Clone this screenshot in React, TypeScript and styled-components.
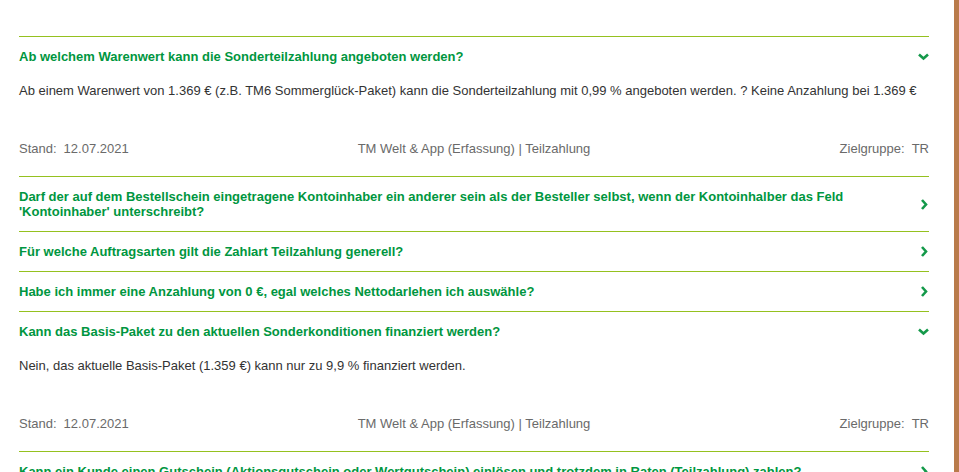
import React from "react";
import styled, { createGlobalStyle } from "styled-components";

const GlobalStyle = createGlobalStyle`
  html, body {
    margin: 0;
    padding: 0;
    background: #ffffff;
    overflow: hidden;
  }
  body {
    font-family: "Liberation Sans", Arial, sans-serif;
  }
`;

const Frame = styled.div`
  display: grid;
  grid-template-columns: 1fr 5px;
  width: 959px;
  height: 472px;
  overflow: hidden;
`;

const Content = styled.main`
  padding: 36px 25px 0 19px;
`;

const SideBar = styled.div`
  background: #b97b4b;
`;

const FaqList = styled.div`
  display: flex;
  flex-direction: column;
`;

const Item = styled.section`
  border-top: 1px solid #95c11f;
`;

const Question = styled.div`
  display: flex;
  align-items: center;
  justify-content: space-between;
  padding: 12px 0;
  cursor: pointer;
`;

const Title = styled.h3`
  margin: 0;
  padding-right: 40px;
  font-size: 13px;
  line-height: 15px;
  font-weight: bold;
  color: #009640;
`;

const Chevron = styled.svg`
  flex: none;
  width: 11px;
  height: 11px;
`;

const Answer = styled.div`
  padding: 7px 0 20px;
`;

const AnswerText = styled.p`
  margin: 0;
  font-size: 13px;
  line-height: 15px;
  color: #333333;
`;

const Meta = styled.div`
  display: grid;
  grid-template-columns: 1fr auto 1fr;
  margin-top: 43px;
  font-size: 13px;
  line-height: 15px;
  color: #6a6a6a;
`;

const MetaCell = styled.div<{ $align: "left" | "center" | "right" }>`
  text-align: ${(p) => p.$align};
`;

const Label = styled.span`
  margin-right: 7px;
`;

type Faq = {
  q: string;
  a?: string;
};

const faqs: Faq[] = [
  {
    q: "Ab welchem Warenwert kann die Sonderteilzahlung angeboten werden?",
    a: "Ab einem Warenwert von 1.369 € (z.B. TM6 Sommerglück-Paket) kann die Sonderteilzahlung mit 0,99 % angeboten werden. ? Keine Anzahlung bei 1.369 €",
  },
  {
    q: "Darf der auf dem Bestellschein eingetragene Kontoinhaber ein anderer sein als der Besteller selbst, wenn der Kontoinhalber das Feld 'Kontoinhaber' unterschreibt?",
  },
  { q: "Für welche Auftragsarten gilt die Zahlart Teilzahlung generell?" },
  {
    q: "Habe ich immer eine Anzahlung von 0 €, egal welches Nettodarlehen ich auswähle?",
  },
  {
    q: "Kann das Basis-Paket zu den aktuellen Sonderkonditionen finanziert werden?",
    a: "Nein, das aktuelle Basis-Paket (1.359 €) kann nur zu 9,9 % finanziert werden.",
  },
  {
    q: "Kann ein Kunde einen Gutschein (Aktionsgutschein oder Wertgutschein) einlösen und trotzdem in Raten (Teilzahlung) zahlen?",
  },
];

const ChevronIcon: React.FC<{ open: boolean }> = ({ open }) => (
  <Chevron viewBox="0 0 11 11">
    <polyline
      points={open ? "1,3.5 5.5,7.5 10,3.5" : "4,1 8,5.5 4,10"}
      fill="none"
      stroke="#14994a"
      strokeWidth="2.6"
    />
  </Chevron>
);

const App: React.FC = () => {
  return (
    <>
      <GlobalStyle />
      <Frame>
        <Content>
          <FaqList>
            {faqs.map((f) => (
              <Item key={f.q}>
                <Question>
                  <Title>{f.q}</Title>
                  <ChevronIcon open={!!f.a} />
                </Question>
                {f.a && (
                  <Answer>
                    <AnswerText>{f.a}</AnswerText>
                    <Meta>
                      <MetaCell $align="left">
                        <Label>Stand:</Label>12.07.2021
                      </MetaCell>
                      <MetaCell $align="center">
                        TM Welt &amp; App (Erfassung) | Teilzahlung
                      </MetaCell>
                      <MetaCell $align="right">
                        <Label>Zielgruppe:</Label>TR
                      </MetaCell>
                    </Meta>
                  </Answer>
                )}
              </Item>
            ))}
          </FaqList>
        </Content>
        <SideBar />
      </Frame>
    </>
  );
};

export default App;
